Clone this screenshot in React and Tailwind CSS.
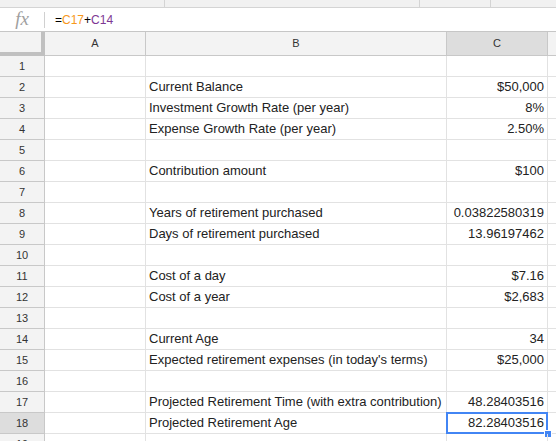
import React from "react";

const rows = [
  { b: "", c: "" },
  { b: "Current Balance", c: "$50,000" },
  { b: "Investment Growth Rate (per year)", c: "8%" },
  { b: "Expense Growth Rate (per year)", c: "2.50%" },
  { b: "", c: "" },
  { b: "Contribution amount", c: "$100" },
  { b: "", c: "" },
  { b: "Years of retirement purchased", c: "0.03822580319" },
  { b: "Days of retirement purchased", c: "13.96197462" },
  { b: "", c: "" },
  { b: "Cost of a day", c: "$7.16" },
  { b: "Cost of a year", c: "$2,683" },
  { b: "", c: "" },
  { b: "Current Age", c: "34" },
  { b: "Expected retirement expenses (in today's terms)", c: "$25,000" },
  { b: "", c: "" },
  { b: "Projected Retirement Time (with extra contribution)", c: "48.28403516" },
  { b: "Projected Retirement Age", c: "82.28403516" },
  { b: "", c: "" },
];

const cols = "grid grid-cols-[45px_101px_301px_101px_1fr]";

export default function App() {
  return (
    <div className="w-[556px] h-[441px] overflow-hidden bg-white font-['Liberation_Sans',Arial,sans-serif] text-[13px] text-[#222]">
      {/* toolbar remnant */}
      <div className="flex h-[8px] bg-[#f1f1f1] border-b border-[#d4d4d4]">
        <div className="w-[165px] border-r border-[#d4d4d4]" />
        <div className="w-[255px] border-r border-[#d4d4d4]" />
        <div className="w-[71px] border-r border-[#d4d4d4]" />
      </div>

      {/* formula bar */}
      <div className="flex items-center h-[24px] border-b border-[#c6c6c6] bg-white">
        <div className="w-[44px] flex justify-center pb-[2px]">
          <span className="font-['Liberation_Serif','DejaVu_Serif',serif] italic text-[19px] text-[#a0a0a0] leading-none">
            fx
          </span>
        </div>
        <div className="w-px h-[16px] bg-[#d0d0d0]" />
        <div className="pl-[10px] text-[12px]">
          <span className="text-[#000]">=</span>
          <span className="text-[#f7981d]">C17</span>
          <span className="text-[#000]">+</span>
          <span className="text-[#7e3794]">C14</span>
        </div>
      </div>

      {/* column headers */}
      <div className={`${cols} h-[24px] bg-[#f3f3f3] text-[11px] text-[#333]`}>
        <div className="border-r-4 border-b-4 border-[#c0c0c0]" />
        <div className="flex items-center justify-center border-r border-b border-[#c8c8c8]">A</div>
        <div className="flex items-center justify-center border-r border-b border-[#c8c8c8]">B</div>
        <div className="flex items-center justify-center border-r border-b border-[#c8c8c8] bg-[#dddddd]">C</div>
        <div className="border-b border-[#c8c8c8]" />
      </div>

      {/* rows */}
      {rows.map((r, i) => {
        const n = i + 1;
        const selected = n === 18;
        return (
          <div key={n} className={`${cols} h-[21px]`}>
            <div
              className={`flex items-center justify-center border-r border-b border-[#c8c8c8] text-[11px] text-[#333] ${
                selected ? "bg-[#dddddd]" : "bg-[#f3f3f3]"
              }`}
            >
              {n}
            </div>
            <div className="border-r border-b border-[#e2e2e2]" />
            <div className="flex items-center pl-[3px] border-r border-b border-[#e2e2e2] whitespace-nowrap overflow-hidden">
              {r.b}
            </div>
            <div className="relative flex items-center justify-end pr-[3px] border-r border-b border-[#e2e2e2] whitespace-nowrap">
              {r.c}
              {selected && (
                <>
                  <div className="absolute left-[-1px] top-[-1px] right-[-1px] bottom-[-1px] border-2 border-[#4285f4]" />
                  <div className="absolute right-[-5px] bottom-[-5px] w-[8px] h-[8px] bg-[#4285f4] border border-white" />
                </>
              )}
            </div>
            <div className="border-b border-[#e2e2e2]" />
          </div>
        );
      })}
    </div>
  );
}
